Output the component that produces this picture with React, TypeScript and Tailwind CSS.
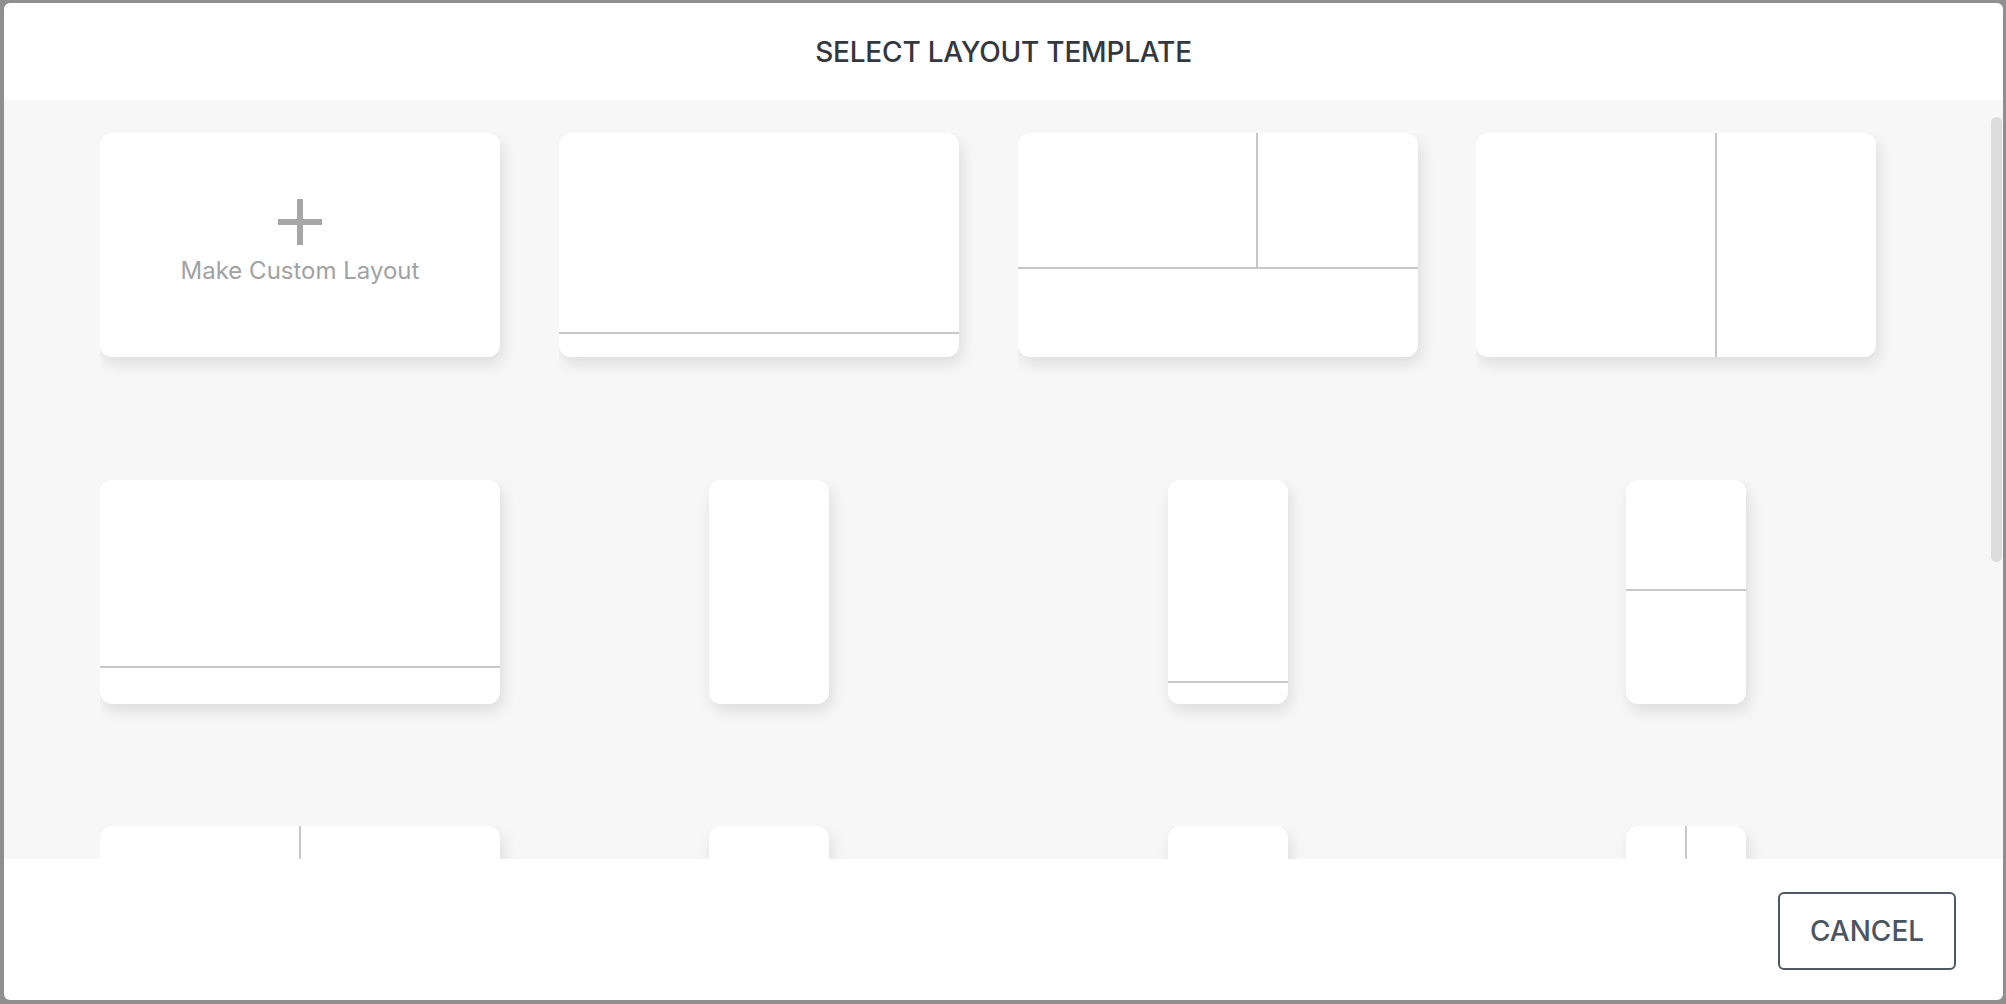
import { ReactNode } from "react";

type Cell = {
  narrow?: boolean;
  body: ReactNode;
};

const line = "bg-[#c8c8c8]";

const Card = ({ narrow, children }: { narrow?: boolean; children: ReactNode }) => (
  <div className="h-[346.5px] overflow-hidden">
    <div
      className={`${narrow ? "w-[120px] mx-auto" : "w-[400px]"} h-[224px] overflow-hidden rounded-xl bg-white shadow-[3px_7px_16px_rgba(0,0,0,0.11)]`}
    >
      {children}
    </div>
  </div>
);

// horizontal split: top part fixed height, then a 2px rule, then the rest
const HSplit = ({ top }: { top: number }) => (
  <div className="flex h-full flex-col">
    <div style={{ height: top }} />
    <div className={`h-[2px] ${line}`} />
    <div className="flex-1" />
  </div>
);

const VSplit = ({ left }: { left: number }) => (
  <div className="flex h-full">
    <div style={{ width: left }} />
    <div className={`w-[2px] ${line}`} />
    <div className="flex-1" />
  </div>
);

const cells: Cell[] = [
  {
    body: (
      <div className="flex h-full flex-col items-center justify-center pb-[6px]">
        <svg width="44" height="46" viewBox="0 0 44 46" className="mb-[12px]">
          <rect x="19" y="0" width="6" height="46" fill="#a6a6a6" />
          <rect x="0" y="20" width="44" height="6" fill="#a6a6a6" />
        </svg>
        <span className="text-[24px] leading-[28px] text-[#a2a2a2]">Make Custom Layout</span>
      </div>
    ),
  },
  { body: <HSplit top={199} /> },
  {
    body: (
      <div className="flex h-full flex-col">
        <div className="flex h-[134px]">
          <div className="w-[238px]" />
          <div className={`w-[2px] ${line}`} />
          <div className="flex-1" />
        </div>
        <div className={`h-[2px] ${line}`} />
        <div className="flex-1" />
      </div>
    ),
  },
  { body: <VSplit left={239} /> },
  { body: <HSplit top={186} /> },
  { narrow: true, body: null },
  { narrow: true, body: <HSplit top={201} /> },
  { narrow: true, body: <HSplit top={109} /> },
  { body: <VSplit left={199} /> },
  { narrow: true, body: null },
  { narrow: true, body: null },
  { narrow: true, body: <VSplit left={59} /> },
];

const App = () => {
  return (
    <div
      className="h-[1004px] w-[2006px] bg-[#8f8f8f] pt-[3px] pr-[3px] pb-[4px] pl-[4px]"
      style={{ fontFamily: "Inter, 'Noto Sans', sans-serif" }}
    >
      <div className="flex h-full flex-col overflow-hidden rounded-md bg-white">
        <div className="flex h-[97px] shrink-0 items-center justify-center">
          <h1 className="text-[28px] font-medium tracking-[-0.2px] text-[#33383f]">SELECT LAYOUT TEMPLATE</h1>
        </div>

        <div className="relative flex-1 overflow-hidden bg-[#f7f7f7]">
          <div className="grid grid-cols-[repeat(4,420px)] gap-x-[38.8px] pt-[33px] pl-[96px]">
            {cells.map((c, i) => (
              <Card key={i} narrow={c.narrow}>
                {c.body}
              </Card>
            ))}
          </div>
          {/* scrollbar thumb */}
          <div className="absolute top-[17px] right-[1px] h-[445px] w-[11px] rounded-full bg-[#dcdcdc]" />
        </div>

        <div className="flex h-[141px] shrink-0 items-center justify-end pr-[47px] pt-[3px]">
          <button className="flex h-[78px] w-[178px] items-center justify-center rounded-md border-2 border-[#4e5864] text-[28px] font-medium text-[#4a5562]">
            CANCEL
          </button>
        </div>
      </div>
    </div>
  );
};

export default App;
